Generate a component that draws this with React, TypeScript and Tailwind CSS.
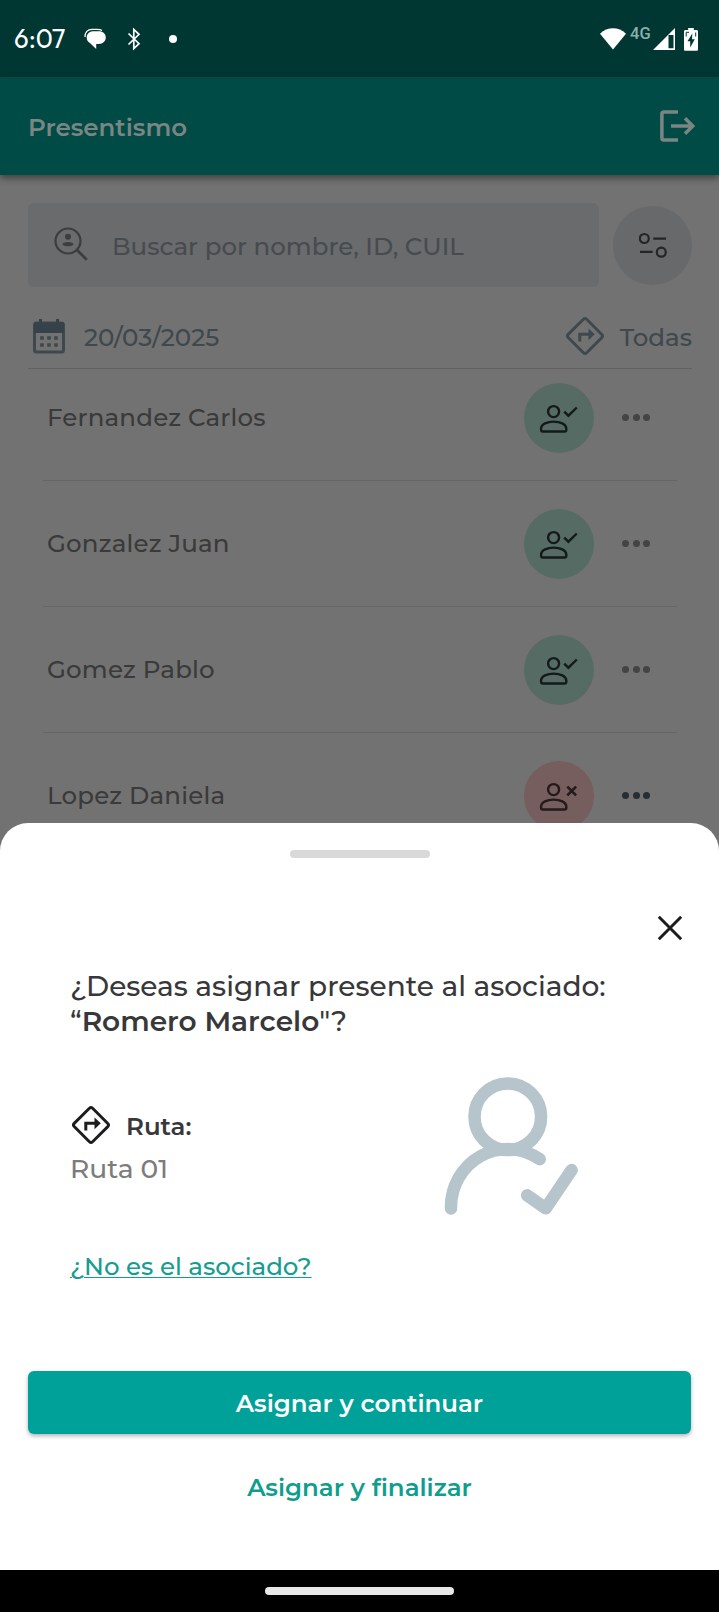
import React from "react";

type Associate = {
  name: string;
  present: boolean;
};

const associates: Associate[] = [
  { name: "Fernandez Carlos", present: true },
  { name: "Gonzalez Juan", present: true },
  { name: "Gomez Pablo", present: true },
  { name: "Lopez Daniela", present: false },
];

const RouteIcon = ({ className }: { className: string }) => (
  <svg className={className} viewBox="0 0 40 40" fill="none">
    <path
      d="M18.4 3.2 3.2 18.4a2.3 2.3 0 0 0 0 3.2l15.2 15.2a2.3 2.3 0 0 0 3.2 0l15.2-15.2a2.3 2.3 0 0 0 0-3.2L21.6 3.2a2.3 2.3 0 0 0-3.2 0Z"
      stroke="currentColor"
      strokeWidth="2.9"
    />
    <path d="M14.8 25.5v-7.2h10" stroke="currentColor" strokeWidth="3" />
    <path d="M23.5 12.5 29.8 18.3 23.5 24.2Z" fill="currentColor" />
  </svg>
);

const PersonIcon = ({ present }: { present: boolean }) => (
  <svg className="w-10 h-10" viewBox="0 0 40 40" fill="none" stroke="currentColor" strokeWidth="2.4">
    <circle cx="14.6" cy="13.6" r="5.5" />
    <path d="M2.1 30.6c0-4.6 6.4-7 12.6-7s12.6 2.4 12.6 7v1.1c0 1.2-.6 1.8-1.8 1.8H3.9c-1.2 0-1.8-.6-1.8-1.8Z" />
    {present ? (
      <path d="m25.2 13.6 4.2 4.1 8.4-8.2" />
    ) : (
      <path d="m28.3 10.6 8.8 8.8M37.1 10.6l-8.8 8.8" strokeWidth="2.6" />
    )}
  </svg>
);

const StatusBar = () => (
  <div className="w-full h-[77px] bg-[#003733] flex items-center justify-between pl-[14px] pr-[21px] text-white">
    <div className="flex items-center">
      <span className="w-[52px] font-['Outfit','Lato',sans-serif] text-[26px] leading-8 whitespace-nowrap">6:07</span>
      <svg className="w-[22px] h-[22px] ml-[18px]" viewBox="0 0 22 22">
        <path
          d="M9.5 3.2h5.300c4.200 0 7 2.700 7 6.200s-2.800 6.500-7 6.500h-2.600v5.100l-6-5.700C3.700 14 2.700 11.800 2.700 9.600c0-3.700 2.800-6.400 6.800-6.400Z"
          fill="currentColor"
        />
        <path d="M1 9C.8 4.200 3.800 1.300 8 1.300h5c2.200 0 3.700.3 5 1.200" fill="none" stroke="currentColor" strokeWidth="1.3" />
      </svg>
      <svg className="w-[14px] h-6 ml-[21px]" viewBox="0 0 14 24" fill="none" stroke="currentColor" strokeWidth="1.7">
        <path d="m1.5 6.5 10.5 10.2-5.2 4.9V2.400L12 7.300 1.5 17.5" />
      </svg>
      <span className="w-2 h-2 ml-[28px] rounded-full bg-white"></span>
    </div>
    <div className="flex items-center h-6">
      <svg className="w-[26px] h-[22px]" viewBox="0 0 26 22">
        <path d="M0 5.800C7.500-1.500 18.500-1.500 26 5.800L13 21.500Z" fill="currentColor" />
      </svg>
      <span className="w-[22px] ml-1 mb-[9px] font-['Roboto',sans-serif] font-medium text-[16.5px] leading-5 text-[#8cafac]">
        4G
      </span>
      <svg className="w-[22px] h-[22px] ml-px" viewBox="0 0 22 22">
        <path fillRule="evenodd" d="M22 0v22H0ZM20.500 7h-5v13.300h5Z" fill="currentColor" />
      </svg>
      <svg className="w-[14px] h-6 ml-[9px]" viewBox="0 0 14 24">
        <path
          d="M4.200 1h5.600v2h2.700c1 0 1.500.5 1.500 1.500v18c0 .8-.5 1.300-1.300 1.300H1.300C.5 23.800 0 23.300 0 22.500v-18C0 3.500.5 3 1.500 3h2.700Z"
          fill="currentColor"
        />
        <path d="M8.300 6.500 3.500 14.300h2.700v6.200l4.600-8.200H8Z" fill="#003733" />
        <path d="M2.200 9.500V5.300H5M11.700 9.500V5.500" stroke="#003733" fill="none" />
      </svg>
    </div>
  </div>
);

const AppBar = () => (
  <div className="relative w-full h-[98px] bg-[#004b45] flex items-center justify-between pl-[28px] pr-6 text-[#7b8583] shadow-[0_3px_7px_rgba(0,0,0,0.45)]">
    <h1 className="pt-[3px] font-semibold text-[24.5px]">Presentismo</h1>
    <svg className="w-[35px] h-8" viewBox="0 0 35 32" fill="none" stroke="currentColor" strokeWidth="3.5">
      <path d="M18 1.900H4c-1.400 0-2.100.7-2.100 2.100v24c0 1.400.7 2.100 2.100 2.100h14" />
      <path d="M11 16h21M25 8.300 32.700 16 25 23.700" />
    </svg>
  </div>
);

const SearchRow = () => (
  <div className="flex items-center justify-between">
    <div className="w-[571px] h-[84px] rounded-md bg-[#696b6d] flex items-center pl-[26px]">
      <svg className="w-[34px] h-[34px] mb-0.5" viewBox="0 0 34 34" fill="none" stroke="#3c3d3e">
        <circle cx="14" cy="14" r="12.5" strokeWidth="2.2" />
        <path d="m23 23 9.800 9.800" strokeWidth="2.7" />
        <circle cx="14" cy="9.700" r="3" fill="#3c3d3e" stroke="none" />
        <path d="M8.300 17.300c1.500-3 9.900-3 11.400 0-2.500 2.700-8.900 2.700-11.400 0Z" fill="#3c3d3e" stroke="none" />
      </svg>
      <span className="ml-[24px] pt-[3px] text-[24.5px] font-medium text-[#454b4f] whitespace-nowrap">
        Buscar por nombre, ID, CUIL
      </span>
    </div>
    <div className="w-[79px] h-[79px] rounded-full bg-[#67696b] flex items-center justify-center">
      <svg className="w-7 h-[26px]" viewBox="0 0 28 26" fill="none" stroke="#242526" strokeWidth="2.2">
        <circle cx="5.300" cy="6.500" r="4.5" />
        <path d="M14.300 6.700H27M1 19.900h12.700" />
        <circle cx="22.300" cy="20.200" r="4.5" />
      </svg>
    </div>
  </div>
);

const FilterRow = () => (
  <div className="h-[82px] flex items-center justify-between pt-[17px] border-b border-[#626060] text-[#3f484c] text-[24.5px] font-medium">
    <div className="flex items-center pl-[5px]">
      <svg className="w-8 h-[36px]" viewBox="0 0 32 36" fill="none">
        <rect x="1.5" y="5" width="29" height="29" rx="2" stroke="currentColor" strokeWidth="3" />
        <path d="M1 4.500h30V15H1Z" fill="#35424a" />
        <path d="M7.500 1v5M24.500 1v5" stroke="#35424a" strokeWidth="3" />
        <path
          d="M7.200 20h3.600M14.200 20h3.600M21.200 20h3.600M7.200 27h3.600M14.200 27h3.600M21.200 27h3.600"
          stroke="currentColor"
          strokeWidth="3.5"
        />
      </svg>
      <span className="ml-[19px] pt-[2px]">20/03/2025</span>
    </div>
    <div className="flex items-center">
      <RouteIcon className="w-10 h-10" />
      <span className="ml-[15px] pt-[2px]">Todas</span>
    </div>
  </div>
);

const AssociateRow = ({ name, present }: Associate) => (
  <div className="h-[126px] flex items-center justify-between pl-[4px] pr-[27px] border-b border-[#656565]">
    <span className="text-[24.5px] font-medium tracking-[0.2px] text-[#3a3a3a]">{name}</span>
    <div className="flex items-center gap-[28px]">
      <div
        className={`w-[70px] h-[70px] rounded-full flex items-center justify-center ${
          present ? "bg-[#576b65] text-[#141a19]" : "bg-[#765d5e] text-[#231a1a]"
        }`}
      >
        <PersonIcon present={present} />
      </div>
      <div className="flex gap-[3.5px]">
        {[0, 1, 2].map((dot) => (
          <span key={dot} className={`w-[7px] h-[7px] rounded-full ${present ? "bg-[#444444]" : "bg-[#252e34]"}`}></span>
        ))}
      </div>
    </div>
  </div>
);

const AssignSheet = () => (
  <div className="w-full h-[747px] rounded-t-[28px] bg-white px-7 pt-[27px] flex flex-col">
    <div className="w-[140px] h-2 shrink-0 rounded-full bg-[#d9d9d9] self-center"></div>
    <button className="mt-[58px] mr-[9px] self-end text-[#1d1d1f]">
      <svg className="w-6 h-6 block" viewBox="0 0 24 24" fill="none" stroke="currentColor" strokeWidth="3">
        <path d="m.8.8 22.400 22.400M23.200.8.8 23.200" />
      </svg>
    </button>
    <div className="px-[42px]">
      <h2 className="mt-[29px] text-[28px] leading-[35px] font-medium text-[#38383a] whitespace-nowrap">
        ¿Deseas asignar presente al asociado:
        <br />“<span className="font-semibold">Romero Marcelo</span>"?
      </h2>
      <div className="mt-[37px] h-[140px] flex justify-between">
        <div className="pt-[29px]">
          <div className="flex items-center h-10 text-[#1d1d1f] pl-px">
            <RouteIcon className="w-10 h-10" />
            <span className="ml-[15px] pt-[2px] font-semibold text-[24.5px] text-[#38383a]">Ruta:</span>
          </div>
          <p className="mt-[6px] text-[26.5px] leading-9 font-medium text-[#7c7c7c]">Ruta 01</p>
        </div>
        <svg
          className="w-[134px] h-[140px] mr-[71px]"
          viewBox="445 1076 134 140"
          fill="none"
          stroke="#b5c5cb"
          strokeWidth="12.5"
          strokeLinecap="round"
          strokeLinejoin="round"
        >
          <circle cx="508.8" cy="1116.7" r="33.3" />
          <path d="M452 1208.500A56.700 58 0 0 1 540.700 1159.200" />
          <path d="m528.200 1195.300 18.600 13 25.800-38.200" />
        </svg>
      </div>
      <a className="inline-block mt-[34px] text-[24.5px] leading-8 font-medium text-[#159d90] underline underline-offset-2 decoration-1">
        ¿No es el asociado?
      </a>
    </div>
    <button className="mt-[89px] h-[63px] shrink-0 rounded-md bg-[#00a199] text-white font-semibold text-[24.5px] pt-[2px] shadow-[0_2px_4px_rgba(0,0,0,0.3)]">
      Asignar y continuar
    </button>
    <button className="mt-[37px] leading-8 font-semibold text-[24.5px] text-[#0f9d8f]">Asignar y finalizar</button>
  </div>
);

const App = () => {
  return (
    <div className="w-[719px] h-[1612px] overflow-hidden bg-[#727272] flex flex-col font-['Montserrat','Inter',sans-serif]">
      <StatusBar />
      <AppBar />
      <div className="h-[648px] shrink-0 overflow-hidden pl-[28px] pr-[27px] pt-[28px]">
        <SearchRow />
        <FilterRow />
        <div className="px-[15px] -mt-[14px]">
          {associates.map((item) => (
            <AssociateRow key={item.name} {...item} />
          ))}
        </div>
      </div>
      <AssignSheet />
      <div className="w-full h-[42px] bg-black flex items-center justify-center">
        <span className="w-[189px] h-[8px] rounded-full bg-[#e8e8e8]"></span>
      </div>
    </div>
  );
};

export default App;
